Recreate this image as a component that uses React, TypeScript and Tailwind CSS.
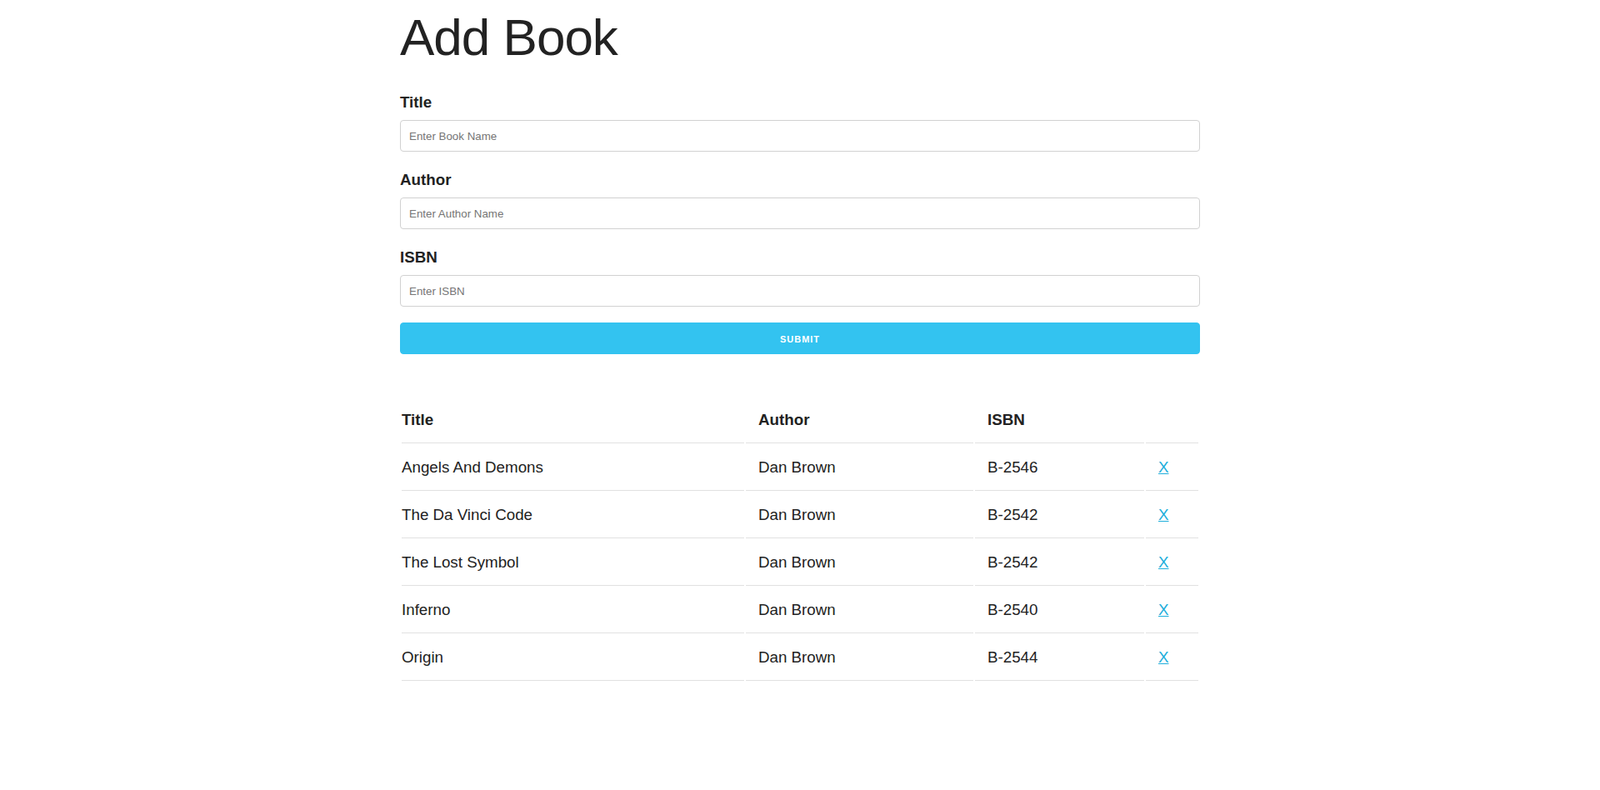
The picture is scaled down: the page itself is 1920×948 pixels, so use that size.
import React from "react";

const books = [
  { title: "Angels And Demons", author: "Dan Brown", isbn: "B-2546" },
  { title: "The Da Vinci Code", author: "Dan Brown", isbn: "B-2542" },
  { title: "The Lost Symbol", author: "Dan Brown", isbn: "B-2542" },
  { title: "Inferno", author: "Dan Brown", isbn: "B-2540" },
  { title: "Origin", author: "Dan Brown", isbn: "B-2544" },
];

function Field({ label, placeholder, first }: { label: string; placeholder: string; first?: boolean }) {
  return (
    <div className={first ? "" : "mt-[19px]"}>
      <label className="block text-[18.75px] font-bold leading-[30px] mb-[6px]">{label}</label>
      <input
        type="text"
        placeholder={placeholder}
        className="block w-full h-[38px] px-[10px] py-[6px] border border-[#D1D1D1] rounded-[4px] bg-white text-[13.333px] text-[#222] placeholder:text-[#757575] outline-none font-['Liberation_Sans',Arial,sans-serif]"
      />
    </div>
  );
}

export default function App() {
  return (
    <div className="min-h-[948px] bg-white text-[#222] font-['Liberation_Sans',Arial,sans-serif] pt-[8px]">
      <div className="w-[960px] mx-auto">
        <h1 className="text-[62px] font-light leading-[74px] tracking-[-1px] mb-[26px]">Add Book</h1>
        <form onSubmit={(e) => e.preventDefault()}>
          <Field label="Title" placeholder="Enter Book Name" first />
          <Field label="Author" placeholder="Enter Author Name" />
          <Field label="ISBN" placeholder="Enter ISBN" />
          <button
            type="submit"
            className="mt-[19px] flex items-center justify-center w-full h-[38px] pt-[2px] rounded-[4px] bg-[#33C3F0] border border-[#33C3F0] text-white text-[11px] font-bold tracking-[1px] uppercase leading-[20px]"
          >
            Submit
          </button>
        </form>
        <table className="mt-[50px] w-full table-fixed border-separate border-spacing-[2px] text-[18.75px] leading-[30px]">
          <colgroup>
            <col className="w-[411px]" />
            <col className="w-[273px]" />
            <col className="w-[203px]" />
            <col className="w-[63px]" />
          </colgroup>
          <thead>
            <tr>
              <th className="text-left font-bold py-[12px] pl-0 pr-[15px] border-b border-[#E1E1E1]">Title</th>
              <th className="text-left font-bold py-[12px] px-[15px] border-b border-[#E1E1E1]">Author</th>
              <th className="text-left font-bold py-[12px] px-[15px] border-b border-[#E1E1E1]">ISBN</th>
              <th className="text-left font-bold py-[12px] pl-[15px] pr-0 border-b border-[#E1E1E1]"></th>
            </tr>
          </thead>
          <tbody>
            {books.map((b, i) => (
              <tr key={i}>
                <td className="py-[12px] pl-0 pr-[15px] border-b border-[#E1E1E1]">{b.title}</td>
                <td className="py-[12px] px-[15px] border-b border-[#E1E1E1]">{b.author}</td>
                <td className="py-[12px] px-[15px] border-b border-[#E1E1E1]">{b.isbn}</td>
                <td className="py-[12px] pl-[15px] pr-0 border-b border-[#E1E1E1]">
                  <a href="#" className="text-[#1EAEDB] underline">X</a>
                </td>
              </tr>
            ))}
          </tbody>
        </table>
      </div>
    </div>
  );
}
